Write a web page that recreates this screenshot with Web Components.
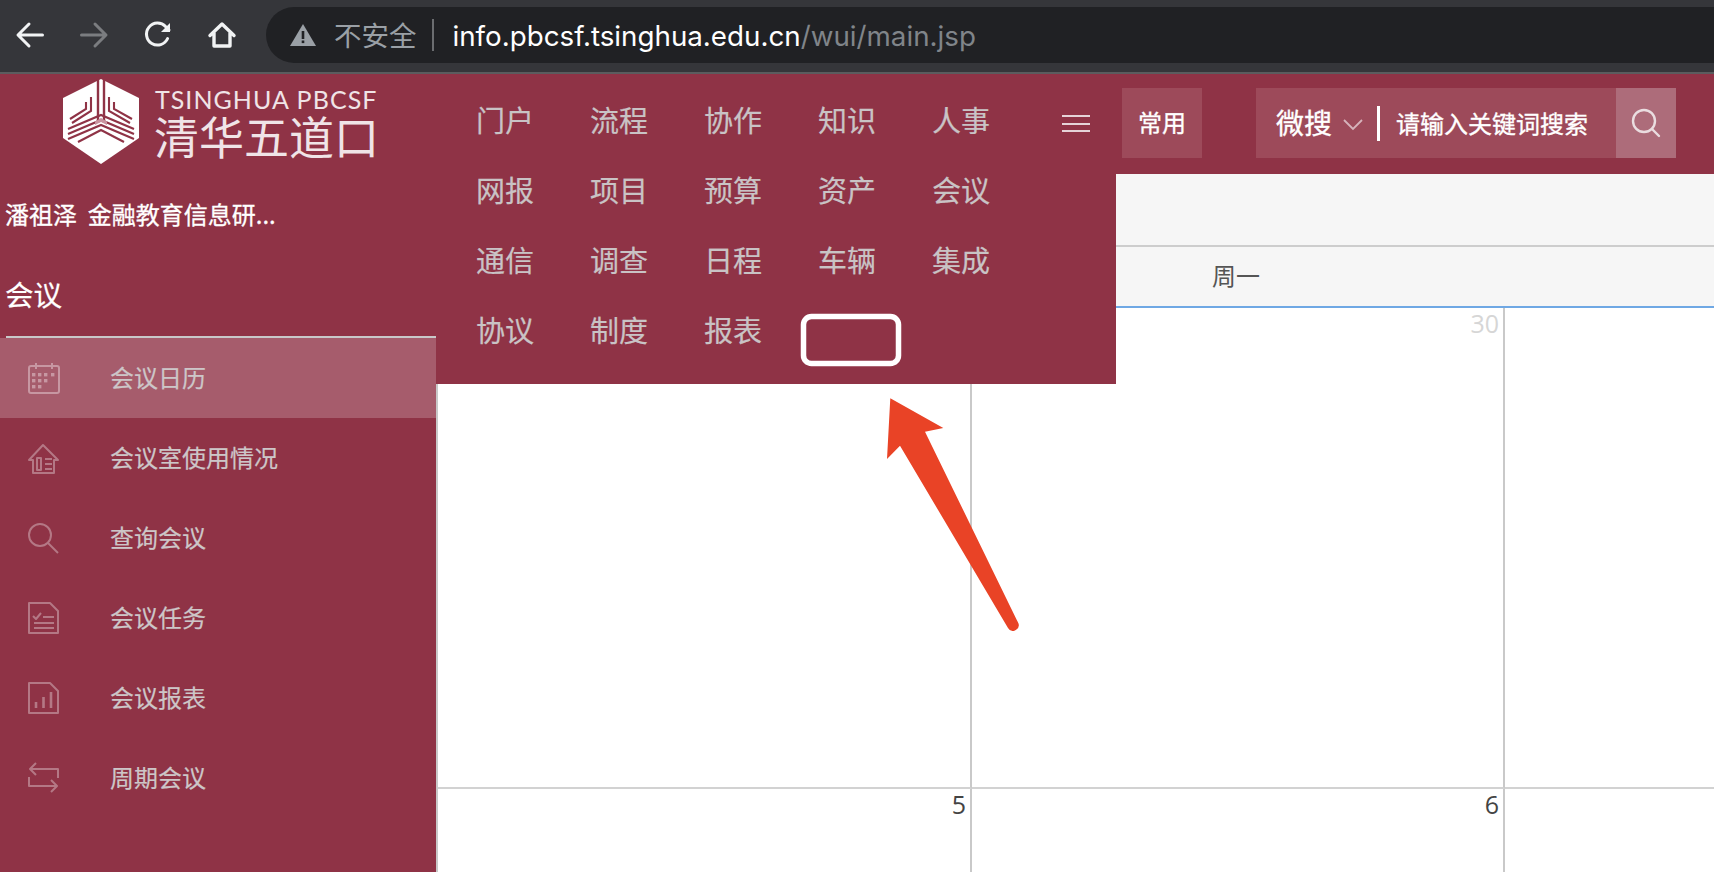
<!DOCTYPE html>
<html lang="zh-CN">
<head>
<meta charset="utf-8">
<title>会议日历</title>
<style>
  html, body { margin: 0; height: 100%; overflow: hidden; background: #fff; }
  body { font-family: "Noto Sans CJK SC", "Noto Sans", sans-serif; }
</style>
</head>
<body>
<screen-frame>
  <browser-bar insecure="不安全" host="info.pbcsf.tsinghua.edu.cn" path="/wui/main.jsp"></browser-bar>
  <app-shell>
    <side-nav slot="side" user="潘祖泽&nbsp;&nbsp;金融教育信息研..." section="会议">
      <side-item icon="calendar" active>会议日历</side-item>
      <side-item icon="room">会议室使用情况</side-item>
      <side-item icon="search">查询会议</side-item>
      <side-item icon="task">会议任务</side-item>
      <side-item icon="chart">会议报表</side-item>
      <side-item icon="repeat">周期会议</side-item>
    </side-nav>
    <top-bar slot="top">
      <top-menu slot="menu">
        <span>门户</span><span>流程</span><span>协作</span><span>知识</span><span>人事</span>
        <span>网报</span><span>项目</span><span>预算</span><span>资产</span><span>会议</span>
        <span>通信</span><span>调查</span><span>日程</span><span>车辆</span><span>集成</span>
        <span>协议</span><span>制度</span><span>报表</span>
      </top-menu>
    </top-bar>
    <month-calendar slot="main"></month-calendar>
  </app-shell>
  <screen-marks></screen-marks>
</screen-frame>

<script>
const CJK = '"Noto Sans CJK SC", "Noto Sans", sans-serif';

class ScreenFrame extends HTMLElement {
  constructor() {
    super();
    this.attachShadow({ mode: 'open' });
    this.shadowRoot.innerHTML = `
      <style>
        :host { display: flex; flex-direction: column; position: relative; width: 1714px; height: 872px; overflow: hidden; }
      </style>
      <slot></slot>
    `;
  }
}

class BrowserBar extends HTMLElement {
  constructor() {
    super();
    this.attachShadow({ mode: 'open' });
  }

  connectedCallback() {
    this.shadowRoot.innerHTML = `
      <style>
        :host {
          display: flex; align-items: center; flex: none; box-sizing: border-box;
          height: 74px; padding: 0 0 2px 15px;
          background: #35363a; border-bottom: 2px solid #5b5c5e;
        }
        button { all: unset; display: block; width: 30px; height: 30px; margin-right: 34px; }
        button svg { display: block; fill: none; stroke: #f1f3f4; stroke-width: 3; stroke-linecap: round; stroke-linejoin: round; }
        button.off svg { stroke: #7b7d80; }
        .home { margin-right: 29px; }
        .omni {
          flex: 1; display: flex; align-items: center; height: 56px;
          padding-left: 24px; background: #202124; border-radius: 28px 0 0 28px;
        }
        .warn { display: block; margin-right: 18px; }
        .label { font: 400 27.500px/1 ${CJK}; color: #9aa0a6; }
        .sep { width: 2px; height: 32px; margin: 0 19px 0 15px; background: #6b6d70; }
        .url { margin-top: 3px; font: 400 27.750px/1 Inter, Roboto, sans-serif; color: #fff; white-space: nowrap; }
        .url span { color: #80858a; }
      </style>
      <button><svg width="30" height="30" viewBox="0 0 30 30"><path d="M27.5 15H3.5M14 4 3 15l11 11"/></svg></button>
      <button class="off"><svg width="30" height="30" viewBox="0 0 30 30"><path d="M2.5 15h24M16 4l11 11-11 11"/></svg></button>
      <button><svg width="30" height="30" viewBox="0 0 30 30"><path d="M24.6 18.5A11 11 0 1 1 22.6 6.6L26 10"/><path d="M27 3v9h-9z" fill="#f1f3f4" stroke="none"/></svg></button>
      <button class="home"><svg width="30" height="30" viewBox="0 0 30 30"><path d="M3 15.5 15 4l12 11.5M7 13v13h16V13" stroke-width="3.4"/></svg></button>
      <div class="omni">
        <svg class="warn" width="26" height="22" viewBox="0 0 26 22"><path d="M13 0 26 22H0z" fill="#9aa0a6"/><rect x="11.7" y="7" width="2.6" height="8" fill="#202124"/><rect x="11.7" y="16.5" width="2.6" height="2.6" fill="#202124"/></svg>
        <span class="label">${this.getAttribute('insecure')}</span>
        <span class="sep"></span>
        <span class="url">${this.getAttribute('host')}<span>${this.getAttribute('path')}</span></span>
      </div>
    `;
  }
}

class AppShell extends HTMLElement {
  constructor() {
    super();
    this.attachShadow({ mode: 'open' });
    this.shadowRoot.innerHTML = `
      <style>
        :host {
          display: grid; flex: 1; min-height: 0;
          grid-template-columns: 436px 1fr; grid-template-rows: 100px 1fr;
          background: #8f3346;
        }
        ::slotted([slot="side"]) { grid-row: 1 / 3; }
      </style>
      <slot name="side"></slot>
      <slot name="top"></slot>
      <slot name="main"></slot>
    `;
  }
}

class SideNav extends HTMLElement {
  constructor() {
    super();
    this.attachShadow({ mode: 'open' });
  }

  connectedCallback() {
    this.shadowRoot.innerHTML = `
      <style>
        :host { display: block; font-family: ${CJK}; background: #8f3346; min-width: 0; }
        .brand { display: flex; align-items: flex-start; height: 122px; padding: 5px 0 0 62px; box-sizing: border-box; color: #f0e4e7; }
        .brand svg { flex: none; display: block; }
        .mark { margin: 8px 0 0 14px; width: 224px; }
        .en { font: 400 25px/25px Lato, "Liberation Sans", sans-serif; letter-spacing: 1.050px; margin-left: 1px; white-space: nowrap; }
        .cn { font: 400 45px/44px ${CJK}; margin-top: 2px; white-space: nowrap; }
        .user { height: 38px; padding-left: 5px; font-size: 24px; line-height: 36px; color: #fff; white-space: nowrap; -webkit-text-stroke: .3px #fff; }
        .section { margin: 41px 0 23px 5px; font-size: 28.500px; line-height: 38px; color: #fff; -webkit-text-stroke: .2px #fff; }
        .rule { height: 2px; margin-left: 6px; background: #c9c9c9; }
      </style>
      <div class="brand">
        <svg width="78" height="86" viewBox="0 0 78 86">
          <path d="M39 0 77 19V59L39 85 1 59V19Z" fill="#fff"/>
          <g fill="none" stroke="#8f3346" stroke-width="2.1">
            <path d="M36 0V44M42 0V44" stroke-width="2.4"/>
            <path d="M29 18V32L10 44"/><path d="M24 23V30L8 40"/>
            <path d="M47 18V32L68 44"/><path d="M52 23V30L70 40"/>
            <path d="M6 50 39 36 72 50"/><path d="M6 55 39 41 72 55"/><path d="M6 60 39 46 72 60"/>
            <path d="M16 63 39 51 62 63"/>
          </g>
          <path d="M39 39 33 42.5V46L39 43 45 46V42.5Z" fill="#c9939f"/>
        </svg>
        <div class="mark">
          <div class="en">TSINGHUA PBCSF</div>
          <div class="cn">清华五道口</div>
        </div>
      </div>
      <div class="user">${this.getAttribute('user')}</div>
      <div class="section">${this.getAttribute('section')}</div>
      <div class="rule"></div>
      <slot></slot>
    `;
  }
}

const SIDE_ICONS = {
  calendar: `<rect x="1" y="4" width="30" height="27" rx="2"/><path d="M8 1v6M24 1v6M13 4h6"/><g fill="currentColor" stroke="none"><rect x="4" y="11" width="3.4" height="3.4"/><rect x="10" y="11" width="3.4" height="3.4"/><rect x="16" y="11" width="3.4" height="3.4"/><rect x="23" y="11" width="3.4" height="3.4"/><rect x="4" y="17" width="3.4" height="3.4"/><rect x="10" y="17" width="3.4" height="3.4"/><rect x="16" y="17" width="3.4" height="3.4"/><rect x="4" y="23" width="3.4" height="3.4"/><rect x="10" y="23" width="3.4" height="3.4"/></g>`,
  room: `<path d="M1 18 15 3l15 15h-4v13H5V18Z"/><rect x="9" y="16" width="4" height="12"/><path d="M17 17h7M17 22h7M17 27h7"/>`,
  search: `<circle cx="12" cy="13" r="11"/><path d="M20 21l10 10"/>`,
  task: `<path d="M1 1h21l8 8v22H1Z"/><path d="M5 14l3 3 5-6M15 15h11M6 21h20M6 26h20"/>`,
  chart: `<path d="M1 1h21l8 8v22H1Z"/><path d="M8 26v-6M15.500 26V15M23 26V10" stroke-width="2.6"/>`,
  repeat: `<path d="M30 16V7H2M8 1 2 7l6 6M1 15v9h28M23 18l6 6-6 6"/>`
};

class SideItem extends HTMLElement {
  constructor() {
    super();
    this.attachShadow({ mode: 'open' });
  }

  connectedCallback() {
    this.shadowRoot.innerHTML = `
      <style>
        :host {
          display: flex; align-items: center; height: 80px; padding-left: 28px; box-sizing: border-box;
          font-size: 24px; color: #cdc6c8; -webkit-text-stroke: .2px #cdc6c8;
        }
        :host([active]) { background: #a65c6c; }
        svg { flex: none; display: block; margin-right: 50px; color: #b47885; fill: none; stroke: currentColor; stroke-width: 2; stroke-linejoin: round; }
        :host([active]) svg { color: #c797a2; }
        .label { margin-top: -3px; }
      </style>
      <svg width="32" height="32" viewBox="0 0 32 32">${SIDE_ICONS[this.getAttribute('icon')]}</svg>
      <span class="label"><slot></slot></span>
    `;
  }
}

class TopBar extends HTMLElement {
  constructor() {
    super();
    this.attachShadow({ mode: 'open' });
    this.shadowRoot.innerHTML = `
      <style>
        :host {
          display: flex; justify-content: flex-end; align-items: flex-start; position: relative;
          padding: 14px 38px 0 0; box-sizing: border-box; height: 100px;
          font-family: ${CJK}; color: #fff;
        }
        .burger { z-index: 6; width: 28px; height: 17px; margin: 27px 32px 0 0; border-top: 2px solid #e6d3d8; border-bottom: 2px solid #e6d3d8; position: relative; box-sizing: border-box; }
        .burger::after { content: ""; position: absolute; left: 0; right: 0; top: 5.500px; height: 2px; background: #e6d3d8; }
        .common { z-index: 6; width: 80px; height: 70px; margin-right: 54px; background: #9d4a5a; font-size: 24px; line-height: 68px; text-align: center; -webkit-text-stroke: .35px #fff; }
        .search { display: flex; align-items: center; width: 360px; height: 70px; background: #9d4a5a; box-sizing: border-box; padding: 0 0 2px 20px; }
        .scope { font-size: 28px; line-height: 68px; -webkit-text-stroke: .35px #fff; }
        .chev { display: block; margin: 6px 14px 0 11px; fill: none; stroke: #d6b3bb; stroke-width: 1.8; }
        .bar { width: 3px; height: 35px; background: #fff; margin: 2px 16px 0 0; }
        .hint { font-size: 24px; white-space: nowrap; -webkit-text-stroke: .35px #fff; }
        .go { display: flex; align-items: center; justify-content: center; width: 60px; height: 70px; background: #ad6c7a; }
        .go svg { display: block; fill: none; stroke: #eadde0; stroke-width: 2.4; stroke-linecap: round; }
      </style>
      <slot name="menu"></slot>
      <div class="burger"></div>
      <div class="common">常用</div>
      <div class="search">
        <span class="scope">微搜</span>
        <svg class="chev" width="20" height="12" viewBox="0 0 20 12"><path d="M1 1l9 9 9-9"/></svg>
        <span class="bar"></span>
        <span class="hint">请输入关键词搜索</span>
      </div>
      <div class="go"><svg width="30" height="30" viewBox="0 0 30 30"><circle cx="13" cy="13" r="11"/><path d="M21 21l7 7"/></svg></div>
    `;
  }
}

class TopMenu extends HTMLElement {
  constructor() {
    super();
    this.attachShadow({ mode: 'open' });
    this.shadowRoot.innerHTML = `
      <style>
        :host {
          position: absolute; left: 0; top: 0; z-index: 5;
          width: 680px; height: 310px; box-sizing: border-box; padding: 10px 0 0 40px;
          background: #8f3346; color: #c9c3c5; font-family: ${CJK}; font-size: 29px;
          -webkit-text-stroke: .2px #c9c3c5;
        }
        .grid { display: grid; grid-template-columns: repeat(5, 114px); grid-auto-rows: 70px; align-items: center; }
        ::slotted(span) { line-height: 70px; white-space: nowrap; }
      </style>
      <div class="grid"><slot></slot></div>
    `;
  }
}

class MonthCalendar extends HTMLElement {
  constructor() {
    super();
    this.attachShadow({ mode: 'open' });
    this.shadowRoot.innerHTML = `
      <style>
        :host {
          display: block; box-sizing: border-box; min-width: 0; overflow: hidden;
          border-left: 2px solid #c9c9c9; background: #fff;
          font-family: "Open Sans", "Noto Sans", ${CJK};
        }
        .tools { height: 71px; background: #f6f6f6; border-bottom: 2px solid #cdcdcd; }
        .week, .cells { display: grid; grid-template-columns: 534px 533px 533px; }
        .week { height: 59px; background: #f6f6f6; border-bottom: 2px solid #6fa8e4; }
        .week div { font: 400 24px/55px ${CJK}; color: #555; text-align: center; padding-right: 5px; }
        .cells { grid-auto-rows: 481px; }
        .cell { box-sizing: border-box; border-right: 2px solid #c9c9c9; border-bottom: 2px solid #d2d2d2; padding: 0 4px 0 0; text-align: right; font-size: 25px; line-height: 30px; color: #444; }
        .cell.dim { color: #d6d6d6; }
      </style>
      <div class="tools"></div>
      <div class="week"><div></div><div>周一</div><div></div></div>
      <div class="cells">
        <div class="cell dim"></div><div class="cell dim">30</div><div class="cell"></div>
        <div class="cell">5</div><div class="cell">6</div><div class="cell"></div>
      </div>
    `;
  }
}

// the red hand drawn marks lie on top of the whole screenshot
class ScreenMarks extends HTMLElement {
  constructor() {
    super();
    this.attachShadow({ mode: 'open' });
    this.shadowRoot.innerHTML = `
      <style>
        :host { position: absolute; left: 0; top: 0; z-index: 10; pointer-events: none; }
        svg { display: block; }
      </style>
      <svg width="1714" height="872" viewBox="0 0 1714 872">
        <rect x="803.500" y="316.500" width="95" height="47" rx="8" fill="none" stroke="#fff" stroke-width="5.500"/>
        <path d="M890.300 398.300 943.300 428 925 431.700 1018.500 623.500Q1020 628 1015 630.500 1010.500 632.500 1008 628L900 445.700 887 459Z" fill="#e94326"/>
      </svg>
    `;
  }
}

customElements.define('screen-frame', ScreenFrame);
customElements.define('browser-bar', BrowserBar);
customElements.define('app-shell', AppShell);
customElements.define('side-nav', SideNav);
customElements.define('side-item', SideItem);
customElements.define('top-bar', TopBar);
customElements.define('top-menu', TopMenu);
customElements.define('month-calendar', MonthCalendar);
customElements.define('screen-marks', ScreenMarks);
</script>
</body>
</html>
